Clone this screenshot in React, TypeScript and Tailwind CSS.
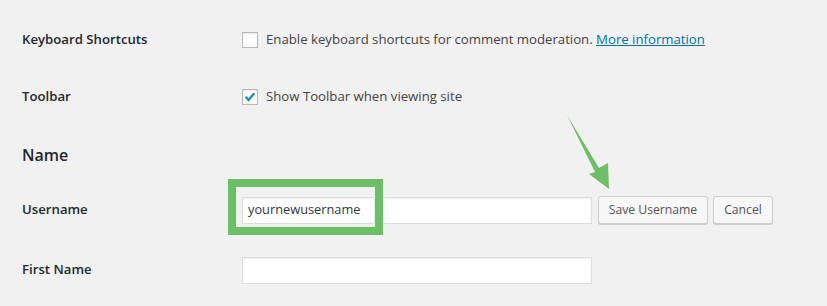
import React from 'react';

const font = { fontFamily: '"Open Sans", "Noto Sans", "Liberation Sans", sans-serif' };

const Checkbox = ({ checked }: { checked?: boolean }) => (
  <span className="relative flex h-4 w-4 flex-shrink-0 items-center justify-center border border-[#b4b9be] bg-white shadow-[inset_0_1px_2px_rgba(0,0,0,0.1)]">
    {checked && (
      <svg viewBox="0 0 16 16" className="h-4 w-4">
        <path d="M3 7.8 L6.4 11.4 L12.8 3.8" fill="none" stroke="#1e8cbe" strokeWidth="2.8" />
      </svg>
    )}
  </span>
);

const Label = ({ children }: { children: React.ReactNode }) => (
  <div className="w-[220px] flex-shrink-0 text-[13.2px] font-semibold text-[#23282d]">{children}</div>
);

export default function App() {
  return (
    <div className="relative h-[306px] w-[827px] overflow-hidden bg-[#f1f1f1] pl-[22px] text-[#444]" style={font}>
      {/* Keyboard shortcuts */}
      <div className="flex h-[80px] items-center">
        <Label>Keyboard Shortcuts</Label>
        <div className="flex items-center gap-2 text-[13.2px] text-[#444]">
          <Checkbox />
          <span>
            Enable keyboard shortcuts for comment moderation.{' '}
            <a href="#" className="text-[#0073aa] underline">More information</a>
          </span>
        </div>
      </div>

      {/* Toolbar */}
      <div className="flex h-[34px] items-center">
        <Label>Toolbar</Label>
        <div className="flex items-center gap-2 text-[13.2px] text-[#444]">
          <Checkbox checked />
          <span>Show Toolbar when viewing site</span>
        </div>
      </div>

      {/* Name heading */}
      <div className="flex h-[82px] items-center">
        <h2 className="text-[16px] font-semibold text-[#23282d]">Name</h2>
      </div>

      {/* Username */}
      <div className="flex h-[28px] items-center">
        <Label>Username</Label>
        <div className="flex items-center">
          <div className="flex h-[27px] w-[350px] items-center border border-[#ddd] bg-white px-[5px] text-[12.8px] text-[#32373c] shadow-[inset_0_1px_2px_rgba(0,0,0,0.07)]">
            yournewusername
          </div>
          <button className="ml-[6px] h-[28px] w-[110px] rounded-[3px] border border-[#ccc] bg-[#f7f7f7] text-[12.2px] text-[#555] shadow-[0_1px_0_#ccc]">
            Save Username
          </button>
          <button className="ml-[5px] h-[28px] w-[60px] rounded-[3px] border border-[#ccc] bg-[#f7f7f7] text-[12.2px] text-[#555] shadow-[0_1px_0_#ccc]">
            Cancel
          </button>
        </div>
      </div>

      {/* First Name */}
      <div className="mt-[32px] flex h-[28px] items-center">
        <Label>First Name</Label>
        <div className="h-[27px] w-[350px] border border-[#ddd] bg-white shadow-[inset_0_1px_2px_rgba(0,0,0,0.07)]" />
      </div>

      {/* Highlight annotation */}
      <div className="pointer-events-none absolute left-[228px] top-[179px] h-[56px] w-[155px] border-[8px] border-[#6dbf67]">
        <div className="h-full w-full border border-[#e6f2e4]" />
      </div>

      {/* Arrow annotation */}
      <svg className="pointer-events-none absolute left-0 top-0" width="827" height="306">
        <polygon points="567,115 599,168 608,163 609,189 589,174 595,172" fill="#6dbf67" />
      </svg>
    </div>
  );
}
